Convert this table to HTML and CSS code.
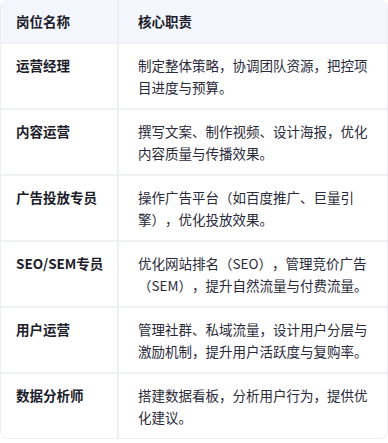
FILE: index.html
```html
<!DOCTYPE html>
<html lang="zh-CN">
<head>
<meta charset="utf-8">
<link rel="stylesheet" href="styles.css">
</head>
<body>
<div class="table">
  <div class="row head">
    <div class="cell">岗位名称</div>
    <div class="cell">核心职责</div>
  </div>
  <div class="row">
    <div class="cell name">运营经理</div>
    <div class="cell">制定整体策略，协调团队资源，把控项目进度与预算。</div>
  </div>
  <div class="row">
    <div class="cell name">内容运营</div>
    <div class="cell">撰写文案、制作视频、设计海报，优化内容质量与传播效果。</div>
  </div>
  <div class="row">
    <div class="cell name">广告投放专员</div>
    <div class="cell">操作广告平台（如百度推广、巨量引擎），优化投放效果。</div>
  </div>
  <div class="row">
    <div class="cell name">SEO/SEM专员</div>
    <div class="cell">优化网站排名（SEO），管理竞价广告（SEM），提升自然流量与付费流量。</div>
  </div>
  <div class="row">
    <div class="cell name">用户运营</div>
    <div class="cell">管理社群、私域流量，设计用户分层与激励机制，提升用户活跃度与复购率。</div>
  </div>
  <div class="row">
    <div class="cell name">数据分析师</div>
    <div class="cell">搭建数据看板，分析用户行为，提供优化建议。</div>
  </div>
</div>
</body>
</html>
```

FILE: styles.css
```css
html, body {
  margin: 0;
  padding: 0;
  background: #ffffff;
}
body {
  font-family: "Noto Sans CJK SC", "Noto Sans", sans-serif;
  font-size: 13.5px;
  color: #2a2a3a;
  text-spacing-trim: space-all;
}
.table {
  border: 1px solid #eceef3;
  border-top: none;
  border-radius: 8px;
  overflow: hidden;
  background: #ffffff;
}
.row {
  display: grid;
  grid-template-columns: 116px 1fr;
  border-top: 2px solid #f0f1f5;
}
.row.head {
  background: #f4f6fd;
  border-top: none;
  font-weight: 700;
  color: #1c1c2b;
}
.cell {
  padding: 10px 16px 10px 15px;
  line-height: 22px;
}
.cell + .cell {
  border-left: 2px solid #eef0f5;
  padding-left: 19px;
}
.name {
  font-weight: 700;
  color: #1c1c2b;
  padding-right: 2px;
  white-space: nowrap;
}
```
